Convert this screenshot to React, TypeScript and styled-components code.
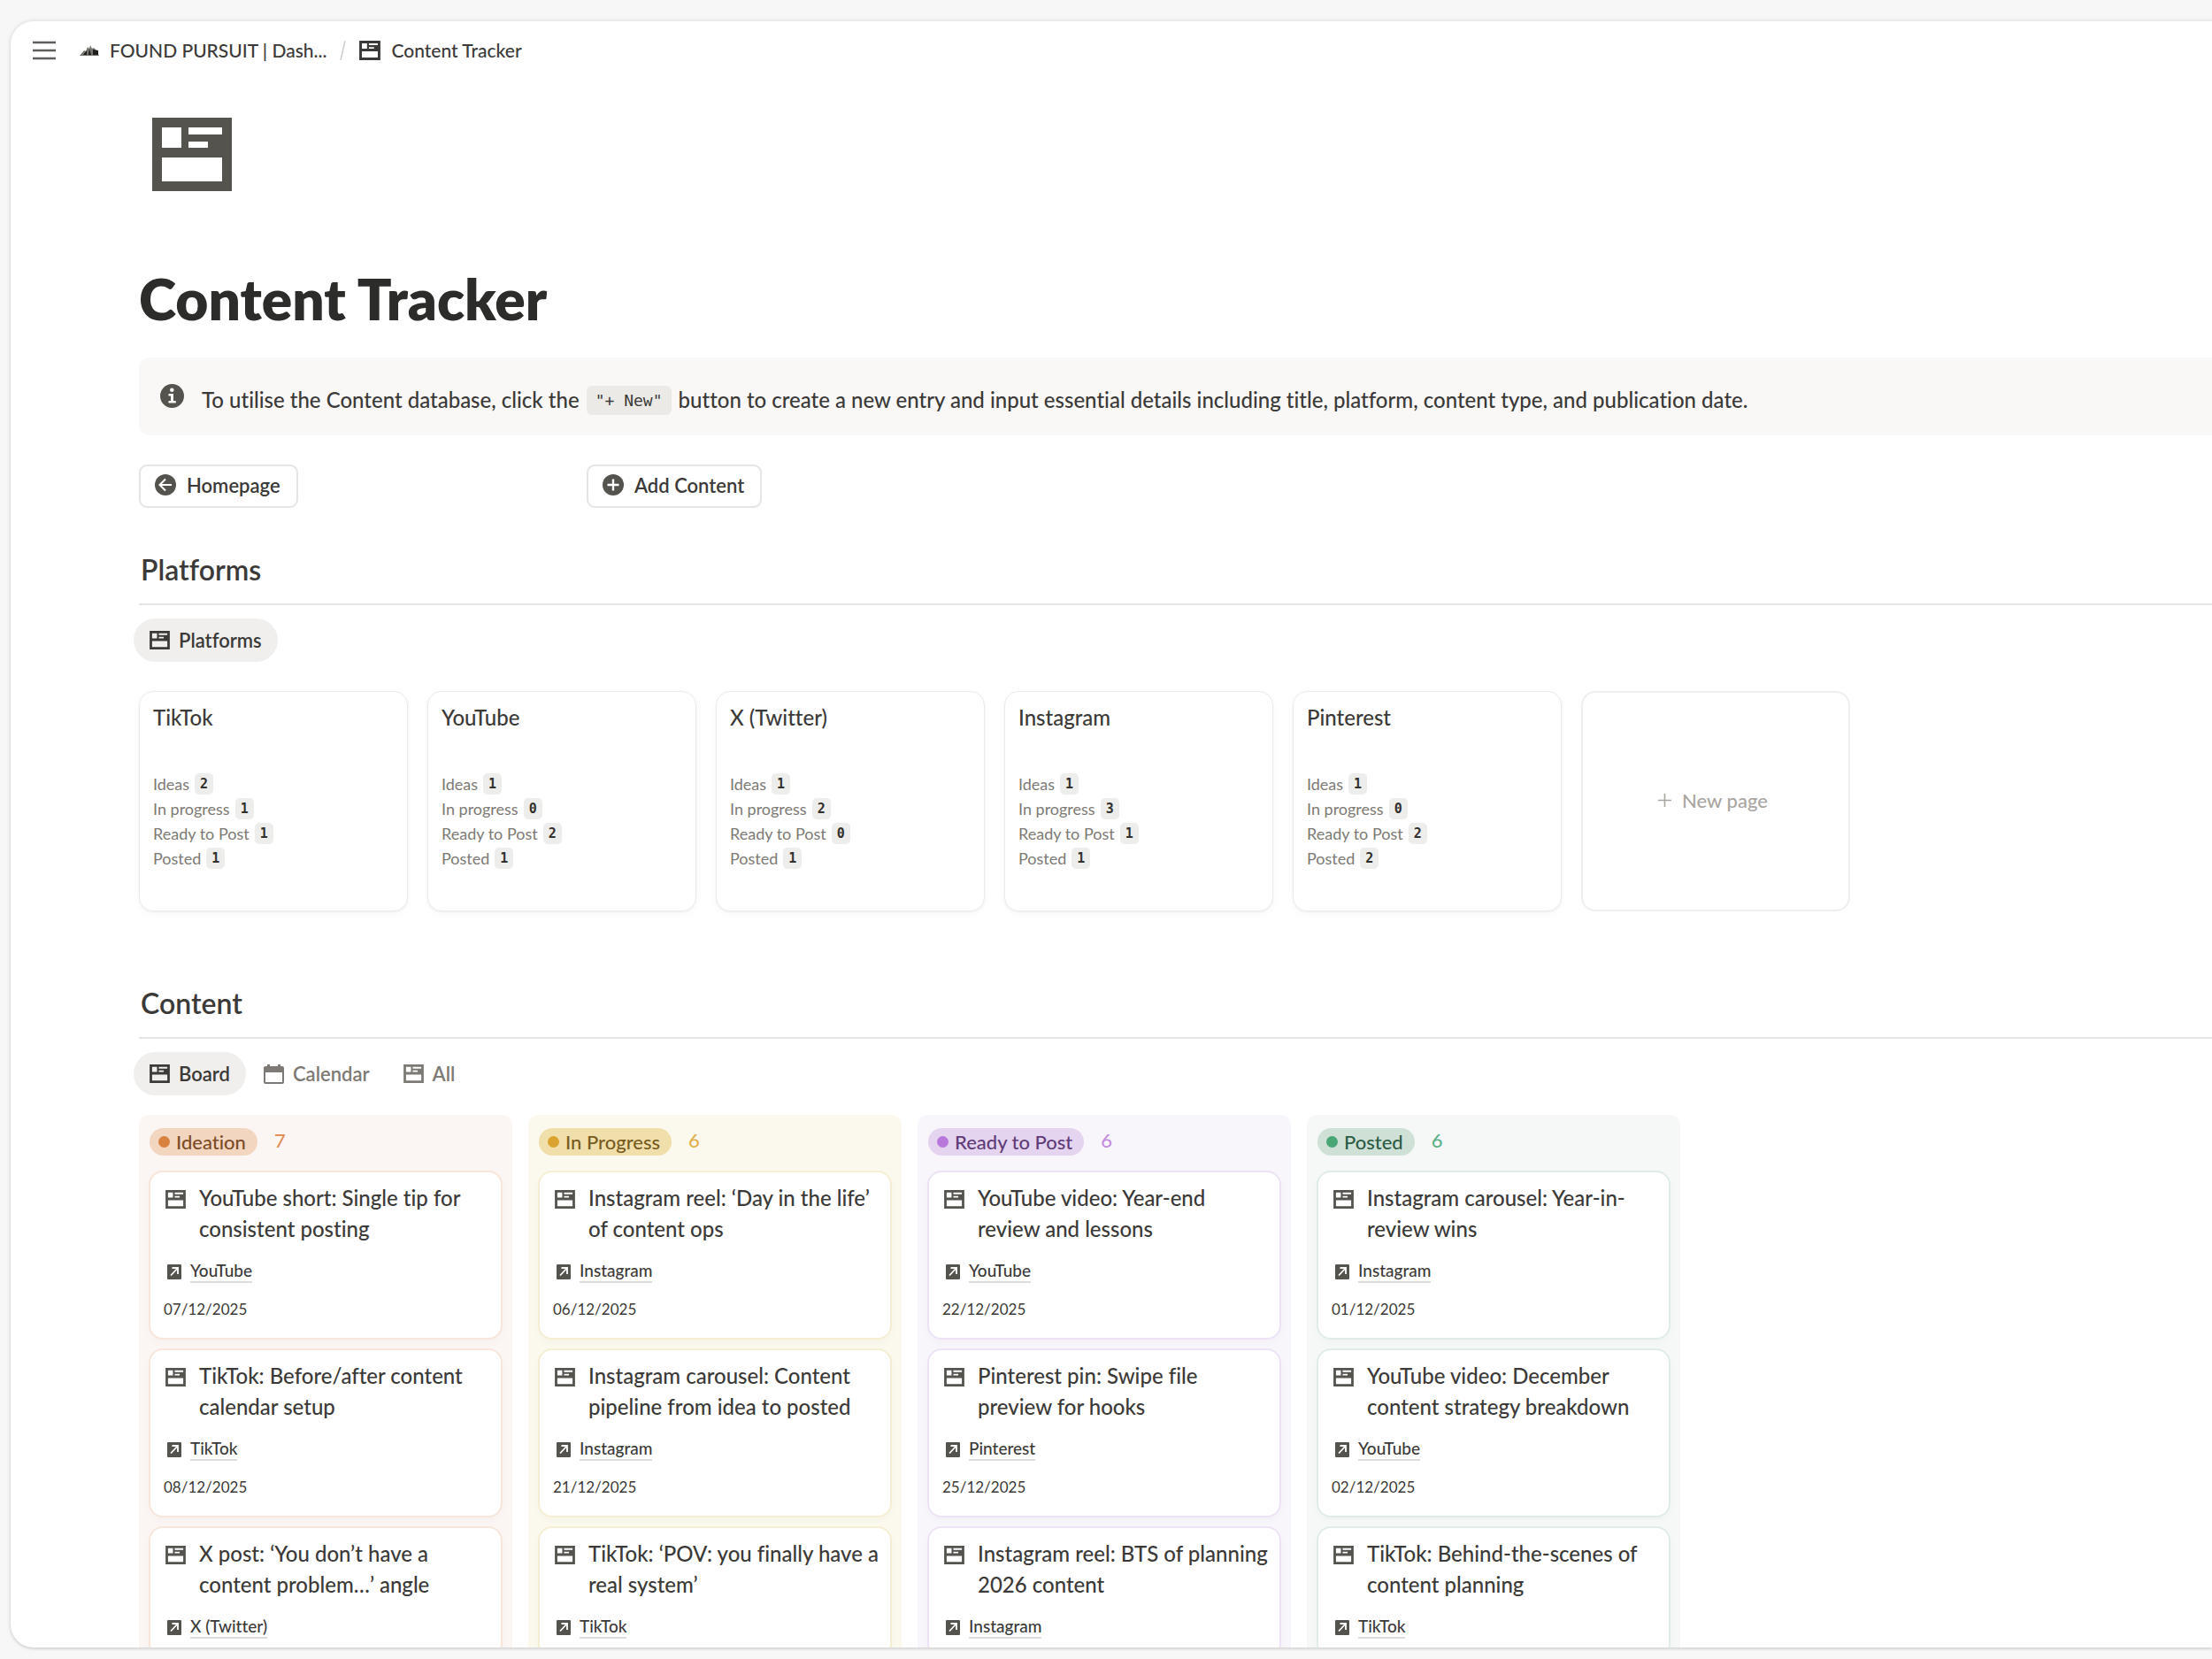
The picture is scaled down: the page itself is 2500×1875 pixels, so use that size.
import React from "react";
import styled, { createGlobalStyle } from "styled-components";

const sans = `Lato, "Open Sans", "Noto Sans", sans-serif`;
const mono = `"DejaVu Sans Mono", "Liberation Mono", monospace`;
const ink = "#2c2c2b";
const body = "#3b3a38";
const iconInk = "#55534e";
const muted = "#7d7a75";
const line = "#e6e5e3";

const GlobalStyle = createGlobalStyle`
  *, *::before, *::after { box-sizing: border-box; }
  body {
    margin: 0;
    background: #f7f7f7;
    color: ${body};
    font-family: ${sans};
    font-size: 22px;
    font-variant-ligatures: none;
  }
  button { font: inherit; color: inherit; cursor: pointer; }
  a { color: inherit; text-decoration: none; }
  h1, h2, h3, p, ul, dl, dd { margin: 0; padding: 0; }
  ul { list-style: none; }
`;

const Shell = styled.div`
  height: 100vh;
  padding: 24px 0 13px 12px;
  overflow: hidden;
`;

const Panel = styled.main`
  height: 100%;
  overflow: hidden;
  background: #fff;
  border-radius: 26px 0 0 26px;
  box-shadow: 0 0 4px 1px rgba(0, 0, 0, 0.1), 0 2px 3px rgba(0, 0, 0, 0.08);
`;

const TopBar = styled.header`
  display: flex;
  align-items: center;
  height: 66px;
  padding-left: 25px;
  gap: 27px;
`;

const MenuButton = styled.button`
  display: flex;
  padding: 0;
  border: 0;
  background: none;
`;

const Crumbs = styled.nav`
  display: flex;
  align-items: center;
  gap: 15px;
  font-size: 21px;
  line-height: 30px;
  font-weight: 500;
`;

const Crumb = styled.a`
  display: flex;
  align-items: center;
  gap: 12px;
`;

const Page = styled.div`
  padding-left: 145px;
`;

const PageIcon = styled.div`
  display: flex;
  padding: 43px 0 0 15px;
  color: ${iconInk};
`;

const Title = styled.h1`
  margin-top: 86px;
  color: ${ink};
  font-size: 64px;
  line-height: 72px;
  font-weight: 800;
`;

const Callout = styled.aside`
  display: flex;
  gap: 20px;
  margin-top: 30px;
  padding: 30px 24px 22px 24px;
  border-radius: 12px 0 0 12px;
  background: #f9f8f6;
  font-size: 24px;
  line-height: 36px;
  font-weight: 500;
`;

const Code = styled.code`
  margin: 0 2px;
  padding: 6px 10px;
  border-radius: 6px;
  background: #ebeae7;
  font-family: ${mono};
  font-size: 18px;
  line-height: 20px;
  font-weight: 400;
  vertical-align: 2px;
`;

const Actions = styled.div`
  display: grid;
  grid-template-columns: 506px 1fr;
  justify-items: start;
  margin-top: 33px;
`;

const ActionButton = styled.button`
  display: flex;
  align-items: center;
  gap: 12px;
  height: 49px;
  padding: 0 18px 3px 16px;
  border: 2px solid ${line};
  border-radius: 9px;
  background: #fff;
  font-weight: 600;
`;

const SectionTitle = styled.h2<{ $space: number }>`
  margin-top: ${(p) => p.$space}px;
  padding: 0 0 18px 2px;
  border-bottom: 2px solid ${line};
  font-size: 32px;
  line-height: 40px;
  font-weight: 600;
`;

const Tabs = styled.div`
  display: flex;
  gap: 2px;
  margin: 15px 0 0 -6px;
`;

const Tab = styled.button<{ $active?: boolean }>`
  display: flex;
  align-items: center;
  gap: 10px;
  height: 49px;
  padding: 0 18px;
  border: 0;
  border-radius: 25px;
  background: ${(p) => (p.$active ? "#f0efed" : "transparent")};
  color: ${(p) => (p.$active ? body : muted)};
  font-weight: 600;
`;

const Gallery = styled.div`
  display: flex;
  gap: 22px;
  margin-top: 33px;
`;

const PlatformCard = styled.article`
  width: 304px;
  height: 249px;
  padding: 15px;
  border: 1px solid #ebeae9;
  border-radius: 16px;
  box-shadow: 0 3px 8px rgba(0, 0, 0, 0.03), 0 1px 2px rgba(0, 0, 0, 0.05);
`;

const PlatformName = styled.h3`
  padding-bottom: 47px;
  font-size: 24px;
  line-height: 28px;
  font-weight: 500;
`;

const Stats = styled.ul`
  color: ${muted};
  font-size: 18px;
  line-height: 28px;
`;

const Stat = styled.li`
  display: flex;
  align-items: center;
  gap: 6px;
`;

const Count = styled.span`
  padding: 0 6px;
  border-radius: 5px;
  background: #ededeb;
  color: #32302c;
  font-family: ${mono};
  font-size: 15px;
  line-height: 24px;
  font-weight: 700;
`;

const NewPage = styled.button`
  display: flex;
  align-items: center;
  justify-content: center;
  gap: 12px;
  width: 304px;
  height: 249px;
  padding: 0 6px 3px 0;
  border: 2px solid #f0efee;
  border-radius: 16px;
  background: #fff;
  color: #a9a6a1;
  font-weight: 500;
`;

const Board = styled.div`
  display: flex;
  align-items: flex-start;
  gap: 18px;
  margin-top: 22px;
`;

type Tone = { bg: string; edge: string; pill: string; dot: string; text: string; count: string };

const Column = styled.section<{ $tone: Tone }>`
  width: 422px;
  padding: 15px 11px;
  border-radius: 12px;
  background: ${(p) => p.$tone.bg};
`;

const ColumnHead = styled.header<{ $tone: Tone }>`
  display: flex;
  align-items: flex-start;
  gap: 19px;
  height: 31px;
  margin-bottom: 17px;
  padding-left: 1px;
  color: ${(p) => p.$tone.count};
  line-height: 28px;
  font-weight: 500;
`;

const Pill = styled.h3<{ $tone: Tone }>`
  display: flex;
  align-items: center;
  gap: 7px;
  padding: 0 13px 0 10px;
  border-radius: 16px;
  background: ${(p) => p.$tone.pill};
  color: ${(p) => p.$tone.text};
  font-size: 22px;
  line-height: 31px;
  font-weight: 500;

  &::before {
    content: "";
    width: 13px;
    height: 13px;
    border-radius: 50%;
    background: ${(p) => p.$tone.dot};
  }
`;

const CardList = styled.div`
  display: grid;
  gap: 10px;
`;

const Card = styled.article<{ $tone: Tone }>`
  padding: 11px 8px 20px 15px;
  border: 2px solid ${(p) => p.$tone.edge};
  border-radius: 16px;
  background: #fff;
  box-shadow: 0 4px 8px rgba(0, 0, 0, 0.025);
`;

const CardTitle = styled.h4`
  display: flex;
  gap: 15px;
  margin: 0;
  font-size: 24px;
  line-height: 35px;
  font-weight: 500;

  svg { flex: none; margin: 9px 0 0 2px; color: ${iconInk}; }
`;

const Relation = styled.p`
  display: flex;
  align-items: center;
  gap: 10px;
  margin-top: 18px;
  padding-left: 4px;
  font-size: 19px;
  line-height: 24px;
  font-weight: 500;
`;

const RelationLink = styled.a`
  border-bottom: 2px solid #dddcda;
`;

const DateText = styled.time`
  display: block;
  margin-top: 18px;
  font-size: 17px;
  line-height: 24px;
`;

const ContentIcon = ({ size = 23 }: { size?: number }) => (
  <svg width={size} height={Math.round(size * 0.92)} viewBox="0 0 90 83" fill="currentColor" aria-hidden="true">
    <path fillRule="evenodd" d="M0 0H90V83H0ZM11 11V34H33V11ZM41 11V19H79V11ZM41 27V34H63V27ZM11 45V72H79V45Z" />
  </svg>
);

const CalendarIcon = () => (
  <svg width="23" height="22" viewBox="0 0 23 22" fill="currentColor" aria-hidden="true">
    <path fillRule="evenodd" d="M4 0H7V2H16V0H19V2H21Q23 2 23 4V20Q23 22 21 22H2Q0 22 0 20V4Q0 2 2 2H4ZM2 9V20H21V9Z" />
  </svg>
);

const MenuIcon = () => (
  <svg width="26" height="22" viewBox="0 0 26 22" stroke="#5f5e5b" strokeWidth="2.4" aria-hidden="true">
    <path d="M0 2H26M0 11H26M0 20H26" />
  </svg>
);

const MountainIcon = () => (
  <svg width="22" height="14" viewBox="0 0 22 14" aria-hidden="true">
    <path d="M0 13L5 7L7 8L9 3L11 5L12 1L14 5L16 4L19 7L22 13Z" fill="#77756f" />
    <path d="M4 12L8 7L8 12M10 12L11 5L13 12M15 6L21 7L21 12L15 12Z" fill="#1f1e1c" />
  </svg>
);

const InfoIcon = () => (
  <svg width="27" height="27" viewBox="0 0 27 27" aria-hidden="true">
    <circle cx="13.5" cy="13.5" r="13.5" fill={iconInk} />
    <circle cx="13.3" cy="6.8" r="2.3" fill="#f9f8f6" />
    <path d="M9.5 11H15V19H17.8V21.5H9.5V19H12V13.5H9.5Z" fill="#f9f8f6" />
  </svg>
);

const BackIcon = () => (
  <svg width="24" height="24" viewBox="0 0 24 24" fill="none" stroke="#fff" strokeWidth="2" aria-hidden="true">
    <circle cx="12" cy="12" r="12" fill={iconInk} stroke="none" />
    <path d="M19 12H6M12 5.5L5.5 12L12 18.5" />
  </svg>
);

const AddIcon = () => (
  <svg width="24" height="24" viewBox="0 0 24 24" fill="none" stroke="#fff" strokeWidth="2.4" aria-hidden="true">
    <circle cx="12" cy="12" r="12" fill={iconInk} stroke="none" />
    <path d="M5.5 12H18.5M12 5.5V18.5" />
  </svg>
);

const PlusIcon = () => (
  <svg width="15" height="15" viewBox="0 0 15 15" stroke="currentColor" strokeWidth="1.6" aria-hidden="true">
    <path d="M0 7.5H15M7.5 0V15" />
  </svg>
);

const ArrowIcon = () => (
  <svg width="16" height="17" viewBox="0 0 16 17" fill="none" aria-hidden="true">
    <rect width="16" height="17" rx="1" fill={iconInk} />
    <path d="M5.5 4H12V11M12 4L4 12.5" stroke="#fff" strokeWidth="1.8" />
  </svg>
);

const SlashIcon = () => (
  <svg width="7" height="22" viewBox="0 0 7 22" stroke="#cfcecb" strokeWidth="1.5" aria-hidden="true">
    <path d="M6 0L1 22" />
  </svg>
);

const statNames = ["Ideas", "In progress", "Ready to Post", "Posted"];

const platforms: { name: string; counts: number[] }[] = [
  { name: "TikTok", counts: [2, 1, 1, 1] },
  { name: "YouTube", counts: [1, 0, 2, 1] },
  { name: "X (Twitter)", counts: [1, 2, 0, 1] },
  { name: "Instagram", counts: [1, 3, 1, 1] },
  { name: "Pinterest", counts: [1, 0, 2, 2] },
];

type Entry = { title: string; platform: string; date?: string };

const columns: { name: string; count: number; tone: Tone; entries: Entry[] }[] = [
  {
    name: "Ideation",
    count: 7,
    tone: { bg: "#fbf5f3", edge: "#f8e6da", pill: "#f2d6c0", dot: "#d9813f", text: "#7c4c27", count: "#e08f55" },
    entries: [
      { title: "YouTube short: Single tip for consistent posting", platform: "YouTube", date: "07/12/2025" },
      { title: "TikTok: Before/after content calendar setup", platform: "TikTok", date: "08/12/2025" },
      { title: "X post: ‘You don’t have a content problem…’ angle", platform: "X (Twitter)" },
    ],
  },
  {
    name: "In Progress",
    count: 6,
    tone: { bg: "#fbf9ed", edge: "#f6eed3", pill: "#f0dfab", dot: "#daa32f", text: "#775c21", count: "#e0ae4a" },
    entries: [
      { title: "Instagram reel: ‘Day in the life’ of content ops", platform: "Instagram", date: "06/12/2025" },
      { title: "Instagram carousel: Content pipeline from idea to posted", platform: "Instagram", date: "21/12/2025" },
      { title: "TikTok: ‘POV: you finally have a real system’", platform: "TikTok" },
    ],
  },
  {
    name: "Ready to Post",
    count: 6,
    tone: { bg: "#f8f5fb", edge: "#eee3f6", pill: "#e5d4ef", dot: "#b877da", text: "#5f3c78", count: "#c48be2" },
    entries: [
      { title: "YouTube video: Year-end review and lessons", platform: "YouTube", date: "22/12/2025" },
      { title: "Pinterest pin: Swipe file preview for hooks", platform: "Pinterest", date: "25/12/2025" },
      { title: "Instagram reel: BTS of planning 2026 content", platform: "Instagram" },
    ],
  },
  {
    name: "Posted",
    count: 6,
    tone: { bg: "#f5f8f7", edge: "#e0ede7", pill: "#cfe1d6", dot: "#48a574", text: "#2c5c45", count: "#5cb088" },
    entries: [
      { title: "Instagram carousel: Year-in-review wins", platform: "Instagram", date: "01/12/2025" },
      { title: "YouTube video: December content strategy breakdown", platform: "YouTube", date: "02/12/2025" },
      { title: "TikTok: Behind-the-scenes of content planning", platform: "TikTok" },
    ],
  },
];

export default function App() {
  return (
    <Shell>
      <GlobalStyle />
      <Panel>
        <TopBar>
          <MenuButton aria-label="Open sidebar"><MenuIcon /></MenuButton>
          <Crumbs aria-label="Breadcrumb">
            <Crumb href="#dashboard"><MountainIcon />FOUND PURSUIT | Dash...</Crumb>
            <SlashIcon />
            <Crumb href="#content-tracker"><ContentIcon size={24} />Content Tracker</Crumb>
          </Crumbs>
        </TopBar>
        <Page>
          <PageIcon><ContentIcon size={90} /></PageIcon>
          <Title>Content Tracker</Title>
          <Callout>
            <InfoIcon />
            <p>
              To utilise the Content database, click the <Code>"+ New"</Code> button to create a new entry and input
              essential details including title, platform, content type, and publication date.
            </p>
          </Callout>
          <Actions>
            <ActionButton><BackIcon />Homepage</ActionButton>
            <ActionButton><AddIcon />Add Content</ActionButton>
          </Actions>

          <SectionTitle $space={50}>Platforms</SectionTitle>
          <Tabs>
            <Tab $active><ContentIcon />Platforms</Tab>
          </Tabs>
          <Gallery>
            {platforms.map((p) => (
              <PlatformCard key={p.name}>
                <PlatformName>{p.name}</PlatformName>
                <Stats>
                  {statNames.map((s, i) => (
                    <Stat key={s}>{s}<Count>{p.counts[i]}</Count></Stat>
                  ))}
                </Stats>
              </PlatformCard>
            ))}
            <NewPage><PlusIcon />New page</NewPage>
          </Gallery>

          <SectionTitle $space={84}>Content</SectionTitle>
          <Tabs>
            <Tab $active><ContentIcon />Board</Tab>
            <Tab><CalendarIcon />Calendar</Tab>
            <Tab><ContentIcon />All</Tab>
          </Tabs>
          <Board>
            {columns.map((c) => (
              <Column key={c.name} $tone={c.tone}>
                <ColumnHead $tone={c.tone}>
                  <Pill $tone={c.tone}>{c.name}</Pill>
                  <span>{c.count}</span>
                </ColumnHead>
                <CardList>
                  {c.entries.map((e) => (
                    <Card key={e.title} $tone={c.tone}>
                      <CardTitle><ContentIcon />{e.title}</CardTitle>
                      <Relation><ArrowIcon /><RelationLink href="#platform">{e.platform}</RelationLink></Relation>
                      {e.date && <DateText>{e.date}</DateText>}
                    </Card>
                  ))}
                </CardList>
              </Column>
            ))}
          </Board>
        </Page>
      </Panel>
    </Shell>
  );
}
